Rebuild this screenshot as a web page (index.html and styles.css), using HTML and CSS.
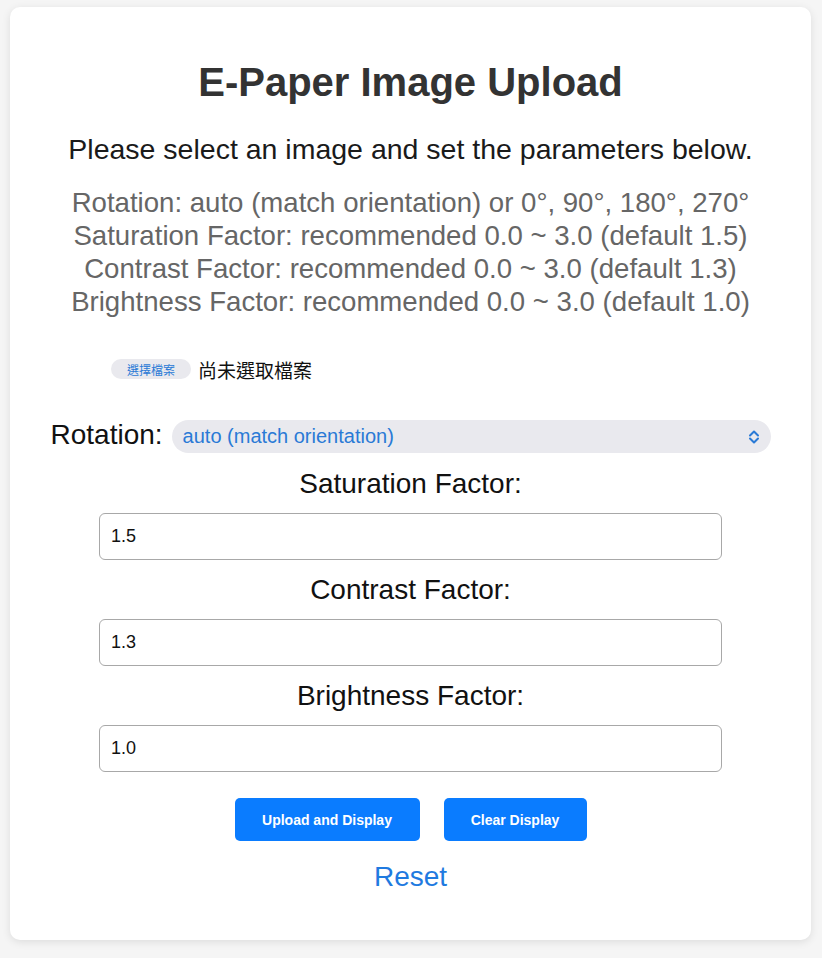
FILE: index.html
```html
<!DOCTYPE html>
<html lang="en">
<head>
<meta charset="utf-8">
<title>E-Paper Image Upload</title>
<link rel="stylesheet" href="styles.css">
</head>
<body>
<div class="card">
  <h1 class="title">E-Paper Image Upload</h1>
  <p class="subtitle">Please select an image and set the parameters below.</p>
  <div class="hints">
    <div>Rotation: auto (match orientation) or 0°, 90°, 180°, 270°</div>
    <div>Saturation Factor: recommended 0.0 ~ 3.0 (default 1.5)</div>
    <div>Contrast Factor: recommended 0.0 ~ 3.0 (default 1.3)</div>
    <div>Brightness Factor: recommended 0.0 ~ 3.0 (default 1.0)</div>
  </div>
  <div class="file-row">
    <span class="file-btn">選擇檔案</span>
    <span class="file-name">尚未選取檔案</span>
  </div>
  <div class="rotation-row">
    <span class="label">Rotation:</span>
    <div class="select">
      <span class="select-text">auto (match orientation)</span>
      <svg class="chevron" width="12" height="16" viewBox="0 0 12 16"><path d="M2 6.5 L6 2.5 L10 6.5 M2 9.5 L6 13.5 L10 9.5" fill="none" stroke="#2a7ad6" stroke-width="2" stroke-linecap="round" stroke-linejoin="round"/></svg>
    </div>
  </div>
  <div class="field-label first">Saturation Factor:</div>
  <div class="input">1.5</div>
  <div class="field-label">Contrast Factor:</div>
  <div class="input">1.3</div>
  <div class="field-label">Brightness Factor:</div>
  <div class="input">1.0</div>
  <div class="buttons">
    <span class="btn btn-upload">Upload and Display</span>
    <span class="btn btn-clear">Clear Display</span>
  </div>
  <div class="reset">Reset</div>
</div>
</body>
</html>
```
FILE: styles.css
```css
* { box-sizing: border-box; }
html, body { margin: 0; padding: 0; }
body {
  background: #f5f5f5;
  font-family: "Liberation Sans", Arial, "Noto Sans CJK TC", sans-serif;
  width: 822px;
  height: 958px;
  padding: 7px 11px 0 10px;
}
.card {
  background: #ffffff;
  border-radius: 10px;
  box-shadow: 0 2px 8px rgba(0,0,0,0.10);
  width: 801px;
  height: 933px;
  display: flex;
  flex-direction: column;
  align-items: center;
  padding-top: 52px;
}
.title {
  margin: 0;
  font-size: 40px;
  line-height: 46px;
  font-weight: bold;
  color: #333333;
}
.subtitle {
  margin: 28px 0 0 0;
  font-size: 28.5px;
  line-height: 32px;
  color: #1a1a1a;
}
.hints {
  margin-top: 21px;
  font-size: 27.6px;
  line-height: 33px;
  color: #666666;
  text-align: center;
}
.file-row {
  align-self: flex-start;
  margin: 38px 0 0 101px;
  display: flex;
  align-items: center;
  gap: 7px;
  height: 26px;
}
.file-btn {
  display: inline-flex;
  align-items: center;
  justify-content: center;
  width: 80px;
  height: 20px;
  border-radius: 10px;
  background: #e9e9ee;
  color: #2a7ad6;
  font-family: "Noto Sans CJK TC", sans-serif;
  font-size: 12px;
}
.file-name {
  font-family: "Noto Sans CJK TC", sans-serif;
  font-size: 19px;
  color: #111111;
}
.rotation-row {
  margin-top: 35px;
  width: 720px;
  display: flex;
  align-items: flex-start;
  gap: 9px;
}
.label {
  padding-top: 2px;
  font-size: 28px;
  line-height: 32px;
  color: #111111;
}
.select {
  flex: 1;
  height: 33px;
  margin-top: 3px;
  border-radius: 17px;
  background: #e9e9ee;
  display: flex;
  align-items: center;
  justify-content: space-between;
  padding: 0 11px 0 11px;
}
.select-text {
  font-size: 20px;
  color: #2a7ad6;
}
.chevron { display: block; }
.field-label {
  margin-top: 14px;
  font-size: 28px;
  line-height: 32px;
  color: #111111;
}
.field-label.first { margin-top: 15px; }
.input {
  margin-top: 13px;
  width: 623px;
  height: 47px;
  border: 1px solid #a8a8a8;
  border-radius: 6px;
  padding: 0 11px;
  display: flex;
  align-items: center;
  font-size: 18px;
  color: #111111;
}
.buttons {
  margin-top: 26px;
  display: flex;
  gap: 24px;
}
.btn {
  height: 43px;
  border-radius: 5px;
  background: #0a7cff;
  color: #ffffff;
  font-weight: bold;
  font-size: 14px;
  display: inline-flex;
  align-items: center;
  justify-content: center;
}
.btn-upload { width: 185px; }
.btn-clear { width: 143px; }
.reset {
  margin-top: 20px;
  font-size: 28px;
  line-height: 32px;
  color: #1f7ae0;
}
```
